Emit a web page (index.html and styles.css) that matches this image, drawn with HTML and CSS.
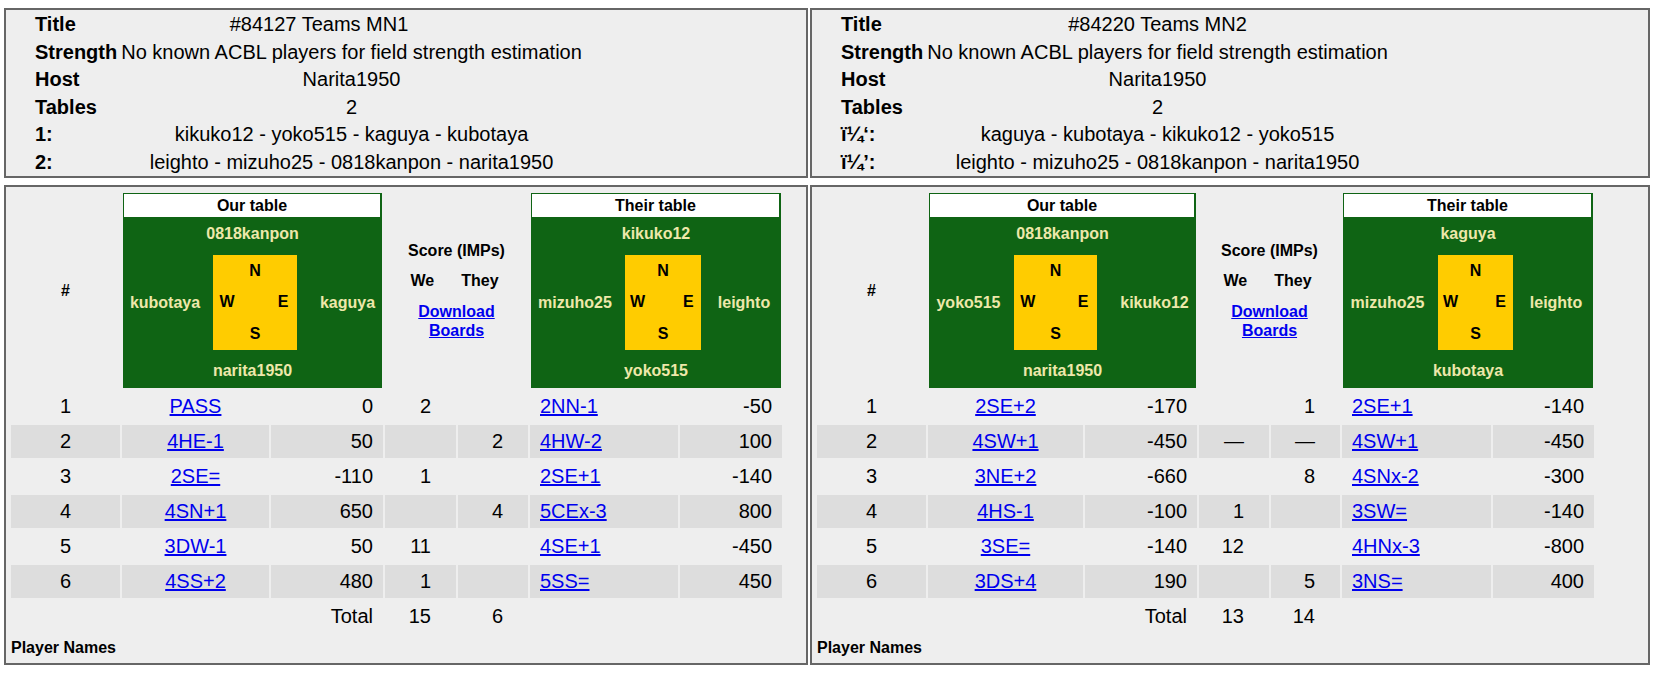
FILE: index.html
```html
<!DOCTYPE html>
<html lang="en">
<head>
<meta charset="utf-8">
<title>Teams MN</title>
<link rel="stylesheet" href="styles.css">
</head>
<body>
<div class="page">

  <section class="panel info">
    <table class="info-table">
      <tr><th>Title</th><td class="title-val">#84127 Teams MN1</td></tr>
      <tr><th>Strength</th><td>No known ACBL players for field strength estimation</td></tr>
      <tr><th>Host</th><td>Narita1950</td></tr>
      <tr><th>Tables</th><td>2</td></tr>
      <tr><th>1:</th><td>kikuko12 - yoko515 - kaguya - kubotaya</td></tr>
      <tr><th>2:</th><td>leighto - mizuho25 - 0818kanpon - narita1950</td></tr>
    </table>
  </section>

  <section class="panel info">
    <table class="info-table">
      <tr><th>Title</th><td>#84220 Teams MN2</td></tr>
      <tr><th>Strength</th><td>No known ACBL players for field strength estimation</td></tr>
      <tr><th>Host</th><td>Narita1950</td></tr>
      <tr><th>Tables</th><td>2</td></tr>
      <tr><th>ï¼‘:</th><td>kaguya - kubotaya - kikuko12 - yoko515</td></tr>
      <tr><th>ï¼’:</th><td>leighto - mizuho25 - 0818kanpon - narita1950</td></tr>
    </table>
  </section>

  <section class="panel match">
    <div class="board">
      <div class="hash">#</div>
      <div class="seats seats-a">
        <div class="seats-title">Our table</div>
        <div class="seat seat-n">0818kanpon</div>
        <div class="seats-mid">
          <div class="seat seat-w">kubotaya</div>
          <div class="compass"><span></span><span>N</span><span></span><span>W</span><span></span><span>E</span><span></span><span>S</span><span></span></div>
          <div class="seat seat-e">kaguya</div>
        </div>
        <div class="seat seat-s">narita1950</div>
      </div>
      <div class="scorehead">
        <div>Score (IMPs)</div>
        <div class="wethey"><span>We</span><span>They</span></div>
        <a href="#">Download<br>Boards</a>
      </div>
      <div class="seats seats-b">
        <div class="seats-title">Their table</div>
        <div class="seat seat-n">kikuko12</div>
        <div class="seats-mid">
          <div class="seat seat-w">mizuho25</div>
          <div class="compass"><span></span><span>N</span><span></span><span>W</span><span></span><span>E</span><span></span><span>S</span><span></span></div>
          <div class="seat seat-e">leighto</div>
        </div>
        <div class="seat seat-s">yoko515</div>
      </div>

      <div class="c num">1</div><div class="c con"><a href="#">PASS</a></div><div class="c sc">0</div><div class="c we">2</div><div class="c th"></div><div class="c con2"><a href="#">2NN-1</a></div><div class="c sc">-50</div>
      <div class="c alt num">2</div><div class="c alt con"><a href="#">4HE-1</a></div><div class="c alt sc">50</div><div class="c alt we"></div><div class="c alt th">2</div><div class="c alt con2"><a href="#">4HW-2</a></div><div class="c alt sc">100</div>
      <div class="c num">3</div><div class="c con"><a href="#">2SE=</a></div><div class="c sc">-110</div><div class="c we">1</div><div class="c th"></div><div class="c con2"><a href="#">2SE+1</a></div><div class="c sc">-140</div>
      <div class="c alt num">4</div><div class="c alt con"><a href="#">4SN+1</a></div><div class="c alt sc">650</div><div class="c alt we"></div><div class="c alt th">4</div><div class="c alt con2"><a href="#">5CEx-3</a></div><div class="c alt sc">800</div>
      <div class="c num">5</div><div class="c con"><a href="#">3DW-1</a></div><div class="c sc">50</div><div class="c we">11</div><div class="c th"></div><div class="c con2"><a href="#">4SE+1</a></div><div class="c sc">-450</div>
      <div class="c alt num">6</div><div class="c alt con"><a href="#">4SS+2</a></div><div class="c alt sc">480</div><div class="c alt we">1</div><div class="c alt th"></div><div class="c alt con2"><a href="#">5SS=</a></div><div class="c alt sc">450</div>
      <div class="c"></div><div class="c"></div><div class="c sc">Total</div><div class="c we">15</div><div class="c th">6</div><div class="c"></div><div class="c"></div>
    </div>
    <div class="names-label">Player Names</div>
  </section>

  <section class="panel match">
    <div class="board wide">
      <div class="hash">#</div>
      <div class="seats seats-c">
        <div class="seats-title">Our table</div>
        <div class="seat seat-n">0818kanpon</div>
        <div class="seats-mid">
          <div class="seat seat-w">yoko515</div>
          <div class="compass"><span></span><span>N</span><span></span><span>W</span><span></span><span>E</span><span></span><span>S</span><span></span></div>
          <div class="seat seat-e">kikuko12</div>
        </div>
        <div class="seat seat-s">narita1950</div>
      </div>
      <div class="scorehead">
        <div>Score (IMPs)</div>
        <div class="wethey"><span>We</span><span>They</span></div>
        <a href="#">Download<br>Boards</a>
      </div>
      <div class="seats seats-d">
        <div class="seats-title">Their table</div>
        <div class="seat seat-n">kaguya</div>
        <div class="seats-mid">
          <div class="seat seat-w">mizuho25</div>
          <div class="compass"><span></span><span>N</span><span></span><span>W</span><span></span><span>E</span><span></span><span>S</span><span></span></div>
          <div class="seat seat-e">leighto</div>
        </div>
        <div class="seat seat-s">kubotaya</div>
      </div>

      <div class="c num">1</div><div class="c con"><a href="#">2SE+2</a></div><div class="c sc">-170</div><div class="c we"></div><div class="c th">1</div><div class="c con2"><a href="#">2SE+1</a></div><div class="c sc">-140</div>
      <div class="c alt num">2</div><div class="c alt con"><a href="#">4SW+1</a></div><div class="c alt sc">-450</div><div class="c alt we">—</div><div class="c alt th">—</div><div class="c alt con2"><a href="#">4SW+1</a></div><div class="c alt sc">-450</div>
      <div class="c num">3</div><div class="c con"><a href="#">3NE+2</a></div><div class="c sc">-660</div><div class="c we"></div><div class="c th">8</div><div class="c con2"><a href="#">4SNx-2</a></div><div class="c sc">-300</div>
      <div class="c alt num">4</div><div class="c alt con"><a href="#">4HS-1</a></div><div class="c alt sc">-100</div><div class="c alt we">1</div><div class="c alt th"></div><div class="c alt con2"><a href="#">3SW=</a></div><div class="c alt sc">-140</div>
      <div class="c num">5</div><div class="c con"><a href="#">3SE=</a></div><div class="c sc">-140</div><div class="c we">12</div><div class="c th"></div><div class="c con2"><a href="#">4HNx-3</a></div><div class="c sc">-800</div>
      <div class="c alt num">6</div><div class="c alt con"><a href="#">3DS+4</a></div><div class="c alt sc">190</div><div class="c alt we"></div><div class="c alt th">5</div><div class="c alt con2"><a href="#">3NS=</a></div><div class="c alt sc">400</div>
      <div class="c"></div><div class="c"></div><div class="c sc">Total</div><div class="c we">13</div><div class="c th">14</div><div class="c"></div><div class="c"></div>
    </div>
    <div class="names-label">Player Names</div>
  </section>

</div>
</body>
</html>
```

FILE: styles.css
```css
* { box-sizing: border-box; }

html, body {
  margin: 0;
  padding: 0;
  background: #ffffff;
}

body {
  font-family: "Liberation Sans", Arial, sans-serif;
  color: #000;
}

a { color: #0000ee; text-decoration: underline; }

.page {
  display: grid;
  grid-template-columns: 804px 840px;
  grid-template-rows: 170px 480px;
  column-gap: 2px;
  row-gap: 7px;
  padding: 8px 4px 0 4px;
}

.panel {
  border: 2px solid #666;
  background: #eeeeee;
}

/* ---------- info panels ---------- */
.info { padding-left: 26px; }

.info-table {
  border-spacing: 2px;
  margin-top: 0;
  font-size: 20px;
}

.info-table th,
.info-table td {
  padding: 1px;
  line-height: 23.6px;
  white-space: nowrap;
}

.info-table th {
  font-weight: bold;
  text-align: left;
}

.info-table td {
  text-align: center;
}

.info-table td.title-val { padding-right: 66px; }

/* ---------- match panels ---------- */
.match { padding: 6px 5px 0 5px; }

.board {
  display: grid;
  grid-template-columns: 109px 147px 112px 71px 70px 148px 102px;
  grid-template-rows: 195px;
  grid-auto-rows: 33px;
  gap: 2px;
}

.board.wide {
  grid-template-columns: 109px 155px 112px 70px 69px 149px 101px;
}

.hash {
  display: flex;
  align-items: center;
  justify-content: center;
  font-weight: bold;
  font-size: 16px;
}

.scorehead {
  grid-column: span 2;
  display: flex;
  flex-direction: column;
  align-items: center;
  justify-content: center;
  gap: 12px;
  font-weight: bold;
  font-size: 16px;
  line-height: 18px;
  text-align: center;
}

.scorehead a { line-height: 19px; }

.wethey {
  display: flex;
  gap: 27px;
  margin-right: 4px;
}

/* seat boxes */
.seats {
  grid-column: span 2;
  margin: 0 1px;
  background: #0f6414;
  display: flex;
  flex-direction: column;
  font-weight: bold;
  font-size: 16px;
}

.seats-title {
  height: 23px;
  line-height: 23px;
  margin: 1px 2px 0 1px;
  background: #fff;
  color: #000;
  text-align: center;
}

.seat {
  color: #eee8aa;
  display: flex;
  align-items: center;
  justify-content: center;
  white-space: nowrap;
}

.seat-n { height: 38px; padding-bottom: 5px; }
.seat-s { height: 38px; padding-top: 3px; }
.seat-w { padding-right: 6px; }
.seat-e { padding-left: 6px; }
.seats-a .seat-e,
.seats-c .seat-e { padding-left: 16px; }

.seats-mid {
  height: 95px;
  display: grid;
}

.seats-a .seats-mid { grid-template-columns: 90px 84px 1fr; }
.seats-b .seats-mid { grid-template-columns: 94px 76px 1fr; }
.seats-c .seats-mid { grid-template-columns: 85px 83px 1fr; }
.seats-d .seats-mid { grid-template-columns: 95px 75px 1fr; }

.compass {
  background: #ffcc00;
  display: grid;
  grid-template-columns: 1fr 1fr 1fr;
  grid-template-rows: 1fr 1fr 1fr;
  color: #000;
}

.compass span {
  display: flex;
  align-items: center;
  justify-content: center;
}

/* data cells */
.c {
  display: flex;
  align-items: center;
  padding: 0 10px;
  font-size: 20px;
  white-space: nowrap;
}

.alt { background: #dddddd; }

.num, .con { justify-content: center; }
.sc { justify-content: flex-end; }
.we, .th { justify-content: flex-end; padding-right: 25px; }
.con2 { justify-content: flex-start; }

.names-label {
  margin-top: 6px;
  font-weight: bold;
  font-size: 16px;
  line-height: 18px;
}
```
